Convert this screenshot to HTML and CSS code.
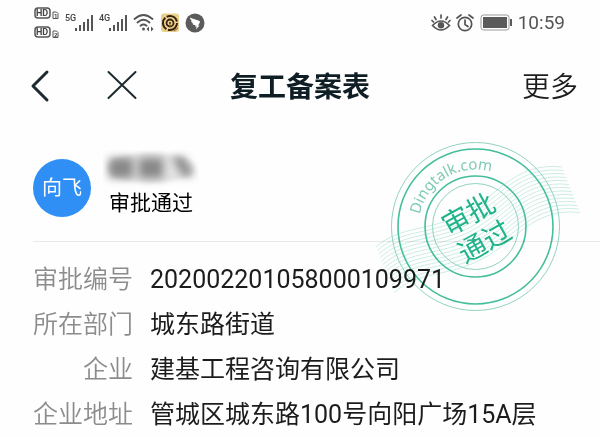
FILE: index.html
```html
<!DOCTYPE html>
<html lang="zh-CN">
<head>
  <meta charset="UTF-8" />
  <meta name="viewport" content="width=device-width, initial-scale=1.0"/>
  <title>复工备案表</title>
  <link rel="stylesheet" href="styles.css">
</head>
<body>
  <div class="status-bar">
    <svg class="hd" width="25" height="34" viewBox="0 0 25 34" aria-hidden="true">
      <rect x="1" y="2" width="15" height="10" rx="3"/>
      <text x="2" y="10">HD</text>
      <path d="M19 6h3.500l1.500 1.500v5h-5z"/>
      <text class="tiny" x="20" y="12">1</text>
      <rect x="1" y="21" width="15" height="10" rx="3"/>
      <text x="2" y="29">HD</text>
      <path d="M19 25h3.500l1.500 1.500v5h-5z"/>
      <text class="tiny" x="20" y="31">2</text>
    </svg>
    <svg class="signal" width="28" height="20" viewBox="0 0 28 20" aria-hidden="true">
      <text x="0" y="8">5G</text>
      <path d="M11 18v-3M15 18v-6M19 18v-9M23 18v-12M27 18v-16"/>
    </svg>
    <svg class="signal" width="28" height="20" viewBox="0 0 28 20" aria-hidden="true">
      <text x="0" y="8">4G</text>
      <path d="M11 18v-3M15 18v-6M19 18v-9M23 18v-12M27 18v-16"/>
    </svg>
    <svg width="22" height="20" viewBox="0 0 22 20" aria-hidden="true">
      <g fill="none" stroke="#555" stroke-width="1.800" stroke-linecap="round">
        <path d="M1.500 6q9-8 18 0M4.500 9.500q6-5.500 12 0M7.500 12.700q3-2.500 6 0"/>
      </g>
      <circle cx="10.500" cy="16" r="1.500" fill="#555"/>
      <path d="M16 13.500v5l-2.500-2.500zM18 13.500v5l2.500-2.500z" fill="#555"/>
    </svg>
    <svg width="20" height="20" viewBox="0 0 20 20" aria-hidden="true">
      <rect x="1" y="0.500" width="18" height="18.500" rx="3" fill="#e9cf8c"/>
      <circle cx="10" cy="10" r="7" fill="#efd793" stroke="#35220e" stroke-width="2" stroke-dasharray="13 1.660"/>
      <circle cx="10" cy="10" r="3.500" fill="none" stroke="#35220e" stroke-width="1.800"/>
      <circle cx="10" cy="10" r="1" fill="#35220e"/>
      <path d="M10 10v4M14 18l4-3" stroke="#8b5e26"/>
    </svg>
    <svg width="20" height="20" viewBox="0 0 20 20" aria-hidden="true">
      <circle cx="10" cy="10" r="9.500" fill="#5b5b5b"/>
      <path d="M5 4.500c3 1.500 6 2 9.500 3.500.8.500.5 1.500-.2 2.500l-1.300 2h1.500l-3.500 4 .7-3H10l.7-1.500c-2 .2-3-.5-3.500-1.500l1.500-.1C6.500 9.500 6 8.500 6 7.500l1.300.2C5.500 6.700 5 5.700 5 4.500z" fill="#fff"/>
    </svg>
    <span class="spacer"></span>
    <svg class="line-icon" width="20" height="20" viewBox="0 0 20 20" aria-hidden="true">
      <path d="M1.500 12.500q8.500-9 17 0-8.500 9-17 0zM10 5V2M5 6.500L3.500 4M15 6.500L16.500 4M2.500 9L1 7.500M17.500 9L19 7.500"/>
      <circle cx="10" cy="12.300" r="3.200" fill="#555" stroke="none"/>
    </svg>
    <svg class="line-icon" width="18" height="20" viewBox="0 0 18 20" aria-hidden="true">
      <circle cx="9" cy="11" r="6.700"/>
      <path d="M9 7v4.500l3 2M1 5l4-3M17 5l-4-3"/>
    </svg>
    <svg class="battery" width="33" height="20" viewBox="0 0 33 20" aria-hidden="true">
      <rect x="1" y="2" width="28" height="15" rx="2.500" fill="#fff" stroke="#999"/>
      <rect x="3" y="4" width="24" height="11" fill="#5b5b5b"/>
      <path d="M31 6v7" stroke="#5b5b5b" stroke-width="2"/>
    </svg>
    <time class="clock">10:59</time>
  </div>

  <header class="nav-bar">
    <button class="icon-btn" type="button" aria-label="返回">
      <svg width="30" height="34" viewBox="0 0 30 34"><path d="M19 3L5 17l14 14" stroke-width="3"/></svg>
    </button>
    <button class="icon-btn" type="button" aria-label="关闭">
      <svg width="30" height="34" viewBox="0 0 30 34"><path d="M1.500 3l27 26M28.500 3l-27 26" stroke-width="2"/></svg>
    </button>
    <h1>复工备案表</h1>
    <button class="more-btn" type="button">更多</button>
  </header>

  <main class="form">
    <section class="applicant">
      <div class="avatar">向飞</div>
      <div class="applicant-info">
        <svg class="masked-name" width="96" height="40" viewBox="0 0 96 40" aria-hidden="true">
          <defs>
            <filter id="soft" x="-20%" y="-60%" width="140%" height="220%"><feGaussianBlur stdDeviation="4"/></filter>
            <filter id="edge" x="-20%" y="-20%" width="140%" height="140%"><feGaussianBlur stdDeviation="2"/></filter>
          </defs>
          <ellipse cx="48" cy="18" rx="44" ry="15" fill="#e2e2e2" filter="url(#edge)"/>
          <path d="M6 8h24v20H6zM36 8h24v20H36zM69 7h12l10 19H80z" fill="#888" filter="url(#soft)"/>
        </svg>
        <p>审批通过</p>
      </div>
    </section>

    <dl class="details">
      <dt>审批编号</dt>
      <dd>202002201058000109971</dd>
      <dt>所在部门</dt>
      <dd>城东路街道</dd>
      <dt>企业</dt>
      <dd>建基工程咨询有限公司</dd>
      <dt>企业地址</dt>
      <dd>管城区城东路100号向阳广场15A层</dd>
    </dl>

    <svg class="stamp" width="212" height="180" viewBox="0 0 212 180" role="img" aria-label="审批通过">
      <defs>
        <path id="wave" d="M6 112C30 90 60 97 95 78S145 27 192 32"/>
        <path id="arc" d="M48.500 91.500a57 57 0 0 1 114 0"/>
      </defs>
      <g class="waves">
        <use href="#wave"/>
        <use href="#wave" x="1.400" y="3.500"/>
        <use href="#wave" x="2.800" y="7"/>
        <use href="#wave" x="4.200" y="10.500"/>
        <use href="#wave" x="5.600" y="14"/>
        <use href="#wave" x="7" y="17.500"/>
        <use href="#wave" x="8.400" y="21"/>
        <use href="#wave" x="9.800" y="24.500"/>
        <use href="#wave" x="11.200" y="28"/>
        <use href="#wave" x="12.600" y="31.500"/>
        <use href="#wave" x="14" y="35"/>
        <use href="#wave" x="15.400" y="38.500"/>
        <use href="#wave" x="16.800" y="42"/>
        <use href="#wave" x="18.200" y="45.500"/>
      </g>
      <g class="rings">
        <circle class="thin" cx="105.500" cy="91.500" r="84"/>
        <circle cx="105.500" cy="91.500" r="77.500"/>
        <circle cx="105.500" cy="91.500" r="50.500"/>
        <circle class="thin" cx="105.500" cy="91.500" r="43"/>
      </g>
      <text class="stamp-site"><textPath href="#arc" startOffset="12">Dingtalk.com</textPath></text>
      <g class="stamp-text" transform="rotate(-29 106.500 93)">
        <text x="106" y="87">审批</text>
        <text x="107" y="119">通过</text>
      </g>
    </svg>
  </main>
</body>
</html>
```
FILE: styles.css
```css
* {
  box-sizing: border-box;
  margin: 0;
  padding: 0;
}

body {
  font-family: Roboto, 'Noto Sans CJK SC', sans-serif;
  background: #fefefe;
  color: #1c1c1c;
  overflow-x: hidden;
}

button {
  background: none;
  border: 0;
  font-family: inherit;
  color: inherit;
  cursor: pointer;
}

svg {
  flex: none;
}

/* status bar */
.status-bar {
  display: flex;
  align-items: center;
  gap: 5px;
  height: 46px;
  padding: 0 35px 0 34px;
  color: #555;
}

.spacer {
  flex: 1;
}

.hd {
  margin-right: 1px;
}

.hd rect,
.hd path {
  fill: none;
  stroke: #555;
}

.hd rect {
  stroke-width: 1.5;
}

.hd text {
  font-size: 9px;
  font-weight: bold;
  fill: #444;
}

.hd .tiny {
  font-size: 6px;
}

.signal {
  margin-right: 1px;
}

.signal path {
  fill: none;
  stroke: #555;
  stroke-width: 2;
}

.signal text {
  font-size: 9px;
  font-weight: 500;
  fill: #444;
}

.line-icon {
  fill: none;
  stroke: #555;
  stroke-width: 1.7;
  stroke-linecap: round;
}

.battery {
  margin-left: 1px;
}

.clock {
  font-size: 19px;
  line-height: 22px;
}

/* title bar */
.nav-bar {
  display: flex;
  align-items: center;
  position: relative;
  height: 80px;
  padding: 0 22px 0 28px;
}

.icon-btn {
  display: flex;
  margin-right: 49px;
}

.icon-btn svg {
  fill: none;
  stroke: #1d2a30;
  stroke-linecap: round;
  stroke-linejoin: round;
}

.nav-bar h1 {
  position: absolute;
  left: 0;
  right: 0;
  padding-top: 4px;
  text-align: center;
  font-size: 28px;
  line-height: 40px;
  color: #0f1d24;
  pointer-events: none;
}

.more-btn {
  margin-left: auto;
  padding-top: 4px;
  font-size: 28px;
  font-weight: 350;
  line-height: 40px;
}

/* form */
.form {
  position: relative;
}

.applicant {
  display: flex;
  gap: 12px;
  margin-left: 33px;
  padding: 24px 0;
  border-bottom: 1px solid #e9e9e9;
}

.avatar {
  width: 58px;
  height: 58px;
  margin-top: 9px;
  border-radius: 50%;
  background: #2f8ff5;
  color: #fff;
  font-size: 20px;
  line-height: 58px;
  text-align: center;
}

.masked-name {
  display: block;
}

.applicant-info p {
  padding-left: 6px;
  font-size: 21px;
  line-height: 27px;
  color: #000;
}

.details {
  display: grid;
  grid-template-columns: 100px 1fr;
  column-gap: 17px;
  padding: 15px 33px 0;
  font-size: 25px;
  line-height: 45px;
}

.details dt {
  text-align: right;
  color: #8c8c8c;
  font-weight: 350;
}

/* approval stamp */
.stamp {
  position: absolute;
  top: 9px;
  right: 18px;
  pointer-events: none;
  mix-blend-mode: multiply;
}

.waves {
  fill: none;
  stroke: #cdeee4;
  stroke-width: 1;
}

.rings {
  fill: none;
  stroke: #45bf9c;
  stroke-width: 1.6;
}

.rings .thin {
  stroke: #92d3c0;
  stroke-width: 1;
}

.stamp-site {
  font-family: 'Noto Sans', sans-serif;
  font-size: 15px;
  fill: #7fcbb5;
}

.stamp-text {
  font-size: 28px;
  font-weight: 400;
  text-anchor: middle;
  fill: #1fb58a;
}
```
